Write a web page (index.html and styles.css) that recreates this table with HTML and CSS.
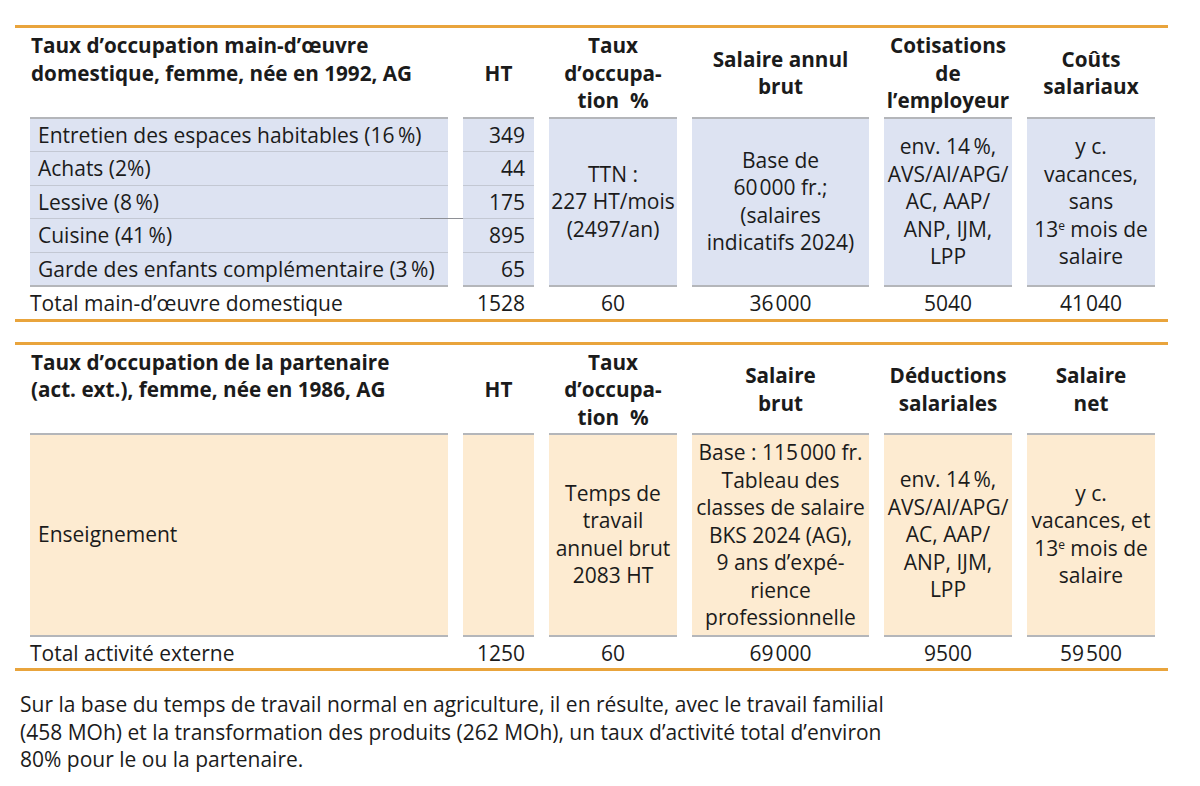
FILE: index.html
```html
<!DOCTYPE html>
<html lang="fr">
<head>
<meta charset="utf-8">
<title>Taux d’occupation</title>
<link rel="stylesheet" href="styles.css">
</head>
<body>
<div class="page">
  <section class="tbl blue">
    <div class="grid">
      <div class="h hl">Taux d’occupation main-d’œuvre<br>domestique, femme, née en 1992, AG</div>
      <div class="h hc"><span>HT</span></div>
      <div class="h hc"><span>Taux<br>d’occupa-<br>tion&nbsp; %</span></div>
      <div class="h hc"><span>Salaire annul<br>brut</span></div>
      <div class="h hc"><span>Cotisations<br>de<br>l’employeur</span></div>
      <div class="h hc"><span>Coûts<br>salariaux</span></div>

      <div class="r lab first">Entretien des espaces habitables (16&#8201;%)</div>
      <div class="r num first">349</div>
      <div class="m span5"><span>TTN :<br>227 HT/mois<br>(2497/an)</span></div>
      <div class="m span5"><span>Base de<br>60<span class="ts"></span>000 fr.;<br>(salaires<br>indicatifs 2024)</span></div>
      <div class="m span5"><span>env. 14&#8201;%,<br>AVS/AI/APG/<br>AC, AAP/<br>ANP, IJM,<br>LPP</span></div>
      <div class="m span5"><span>y c.<br>vacances,<br>sans<br>13<sup>e</sup> mois de<br>salaire</span></div>

      <div class="r lab">Achats (2%)</div>
      <div class="r num">44</div>
      <div class="r lab">Lessive (8&#8201;%)</div>
      <div class="r num">175</div>
      <div class="r lab stray">Cuisine (41&#8201;%)</div>
      <div class="r num">895</div>
      <div class="r lab last">Garde des enfants complémentaire (3&#8201;%)</div>
      <div class="r num last">65</div>

      <div class="t tl">Total main-d’œuvre domestique</div>
      <div class="t tn">1528</div>
      <div class="t">60</div>
      <div class="t">36<span class="ts"></span>000</div>
      <div class="t">5040</div>
      <div class="t">41<span class="ts"></span>040</div>
    </div>
  </section>

  <section class="tbl beige">
    <div class="grid">
      <div class="h hl">Taux d’occupation de la partenaire<br>(act. ext.), femme, née en 1986, AG</div>
      <div class="h hc"><span>HT</span></div>
      <div class="h hc"><span>Taux<br>d’occupa-<br>tion&nbsp; %</span></div>
      <div class="h hc"><span>Salaire<br>brut</span></div>
      <div class="h hc"><span>Déductions<br>salariales</span></div>
      <div class="h hc"><span>Salaire<br>net</span></div>

      <div class="m ml"><span>Enseignement</span></div>
      <div class="m"></div>
      <div class="m"><span>Temps de<br>travail<br>annuel brut<br>2083 HT</span></div>
      <div class="m mt"><span>Base : 115<span class="ts"></span>000 fr.<br>Tableau des<br>classes de salaire<br>BKS 2024 (AG),<br>9 ans d’expé-<br>rience<br>professionnelle</span></div>
      <div class="m"><span>env. 14&#8201;%,<br>AVS/AI/APG/<br>AC, AAP/<br>ANP, IJM,<br>LPP</span></div>
      <div class="m"><span>y c.<br>vacances, et<br>13<sup>e</sup> mois de<br>salaire</span></div>

      <div class="t tl">Total activité externe</div>
      <div class="t tn">1250</div>
      <div class="t">60</div>
      <div class="t">69<span class="ts"></span>000</div>
      <div class="t">9500</div>
      <div class="t">59<span class="ts"></span>500</div>
    </div>
  </section>

  <p class="note">Sur la base du temps de travail normal en agriculture, il en résulte, avec le travail familial<br>(458 MOh) et la transformation des produits (262 MOh), un taux d’activité total d’environ<br>80% pour le ou la partenaire.</p>
</div>
</body>
</html>
```

FILE: styles.css
```css
html, body {
  margin: 0;
  padding: 0;
  background: #ffffff;
}

body {
  font-family: "Open Sans", "Liberation Sans", sans-serif;
  font-size: 21px;
  line-height: 27.5px;
  color: #1b1b1b;
}

.page {
  padding-top: 25px;
  width: 1200px;
}

.tbl {
  width: 1153px;
  margin-left: 15px;
  border-top: 3px solid #e9a43c;
  border-bottom: 3px solid #e9a43c;
}

.tbl + .tbl {
  margin-top: 20px;
}

.grid {
  display: grid;
  grid-template-columns: 418px 71px 128px 177px 128px 128px;
  column-gap: 15px;
  padding: 0 13px 0 15px;
}

.h {
  font-weight: 700;
  font-size: 20.7px;
  padding: 4px 0 2px;
  white-space: nowrap;
}

.hl {
  padding-left: 1px;
}

.hc {
  display: flex;
  align-items: center;
  justify-content: center;
  text-align: center;
}

.r {
  padding: 3px 9px 2px 8px;
  border-bottom: 1px solid #c3c8d3;
  white-space: nowrap;
}

.blue .r,
.blue .m {
  background: #dde3f2;
}

.beige .m {
  background: #fdebd1;
}

.r.first {
  border-top: 2px solid #b4b6ba;
}

.r.last {
  border-bottom: 2px solid #b4b6ba;
}

.num {
  text-align: right;
}

.stray {
  position: relative;
}

.stray::before {
  content: "";
  position: absolute;
  left: 390px;
  right: -15px;
  top: -1px;
  height: 1px;
  background: #8e9096;
}

.m {
  display: flex;
  align-items: center;
  justify-content: center;
  text-align: center;
  border-top: 2px solid #b4b6ba;
  border-bottom: 2px solid #b4b6ba;
  white-space: nowrap;
  padding: 3px 0;
}

.span5 {
  grid-row: span 5;
}

.m.ml {
  justify-content: flex-start;
  padding-left: 8px;
  text-align: left;
}

.m.mt {
  padding: 4px 0 3px;
}

.ts {
  display: inline-block;
  width: 2px;
}

sup {
  font-size: 12px;
  line-height: 0;
  vertical-align: 7px;
}

.t {
  text-align: center;
  padding: 3px 0 1px;
  white-space: nowrap;
}

.t.tl {
  text-align: left;
}

.t.tn {
  text-align: right;
  padding-right: 9px;
}

.note {
  margin: 20px 0 0 20px;
  font-size: 21px;
  line-height: 27.5px;
}
```
